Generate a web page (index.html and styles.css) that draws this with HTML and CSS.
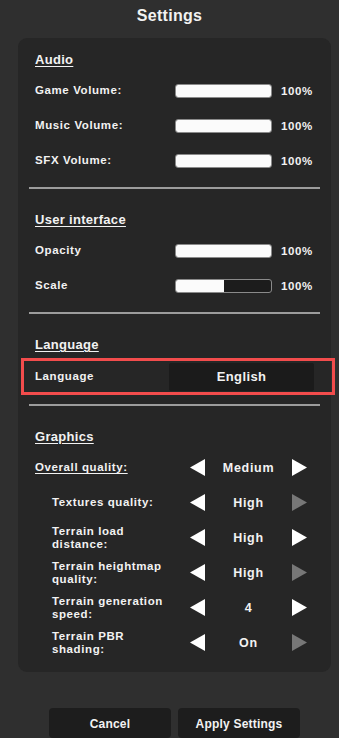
FILE: index.html
```html
<!DOCTYPE html>
<html>
<head>
<meta charset="utf-8">
<link rel="stylesheet" href="styles.css">
</head>
<body>
<div class="screen">
  <h1 class="title">Settings</h1>
  <div class="panel">
    <section class="section first">
      <h2 class="heading">Audio</h2>
      <div class="slider-row"><span class="label">Game Volume:</span><div class="bar"><div class="fill" style="width:100%"></div></div><span class="pct">100%</span></div>
      <div class="slider-row"><span class="label">Music Volume:</span><div class="bar"><div class="fill" style="width:100%"></div></div><span class="pct">100%</span></div>
      <div class="slider-row"><span class="label">SFX Volume:</span><div class="bar"><div class="fill" style="width:100%"></div></div><span class="pct">100%</span></div>
    </section>
    <hr class="divider">
    <section class="section">
      <h2 class="heading">User interface</h2>
      <div class="slider-row"><span class="label">Opacity</span><div class="bar"><div class="fill" style="width:100%"></div></div><span class="pct">100%</span></div>
      <div class="slider-row"><span class="label">Scale</span><div class="bar"><div class="fill" style="width:50%"></div></div><span class="pct">100%</span></div>
    </section>
    <hr class="divider">
    <section class="section">
      <h2 class="heading">Language</h2>
      <div class="lang-row"><span class="label">Language</span><div class="dropdown">English</div></div>
    </section>
    <hr class="divider">
    <section class="section">
      <h2 class="heading">Graphics</h2>
      <div class="opt-row"><span class="label main">Overall quality:</span>
        <svg class="arrow" viewBox="0 0 15 17"><polygon points="15,0 15,17 0,8.5"/></svg>
        <span class="value">Medium</span>
        <svg class="arrow" viewBox="0 0 15 17"><polygon points="0,0 0,17 15,8.5"/></svg>
      </div>
      <div class="opt-row"><span class="label sub">Textures quality:</span>
        <svg class="arrow" viewBox="0 0 15 17"><polygon points="15,0 15,17 0,8.5"/></svg>
        <span class="value">High</span>
        <svg class="arrow off" viewBox="0 0 15 17"><polygon points="0,0 0,17 15,8.5"/></svg>
      </div>
      <div class="opt-row"><span class="label sub">Terrain load distance:</span>
        <svg class="arrow" viewBox="0 0 15 17"><polygon points="15,0 15,17 0,8.5"/></svg>
        <span class="value">High</span>
        <svg class="arrow" viewBox="0 0 15 17"><polygon points="0,0 0,17 15,8.5"/></svg>
      </div>
      <div class="opt-row"><span class="label sub">Terrain heightmap quality:</span>
        <svg class="arrow" viewBox="0 0 15 17"><polygon points="15,0 15,17 0,8.5"/></svg>
        <span class="value">High</span>
        <svg class="arrow off" viewBox="0 0 15 17"><polygon points="0,0 0,17 15,8.5"/></svg>
      </div>
      <div class="opt-row"><span class="label sub">Terrain generation speed:</span>
        <svg class="arrow" viewBox="0 0 15 17"><polygon points="15,0 15,17 0,8.5"/></svg>
        <span class="value">4</span>
        <svg class="arrow" viewBox="0 0 15 17"><polygon points="0,0 0,17 15,8.5"/></svg>
      </div>
      <div class="opt-row"><span class="label sub">Terrain PBR shading:</span>
        <svg class="arrow" viewBox="0 0 15 17"><polygon points="15,0 15,17 0,8.5"/></svg>
        <span class="value">On</span>
        <svg class="arrow off" viewBox="0 0 15 17"><polygon points="0,0 0,17 15,8.5"/></svg>
      </div>
    </section>
  </div>
  <div class="buttons">
    <button class="btn">Cancel</button>
    <button class="btn">Apply Settings</button>
  </div>
</div>
</body>
</html>
```

FILE: styles.css
```css
* { box-sizing: border-box; }
html, body {
  margin: 0;
  padding: 0;
  background: #2f2f2f;
  height: 100%;
  overflow: hidden;
}
body {
  font-family: "Liberation Sans", Arial, sans-serif;
  font-weight: bold;
  color: #f2f2f2;
}
.screen {
  display: flex;
  flex-direction: column;
}
.title {
  margin: 0;
  height: 38px;
  padding-top: 6px;
  font-size: 16px;
  line-height: 20px;
  letter-spacing: 0.3px;
  text-align: center;
  font-weight: bold;
}
.panel {
  margin: 0 8px 0 18px;
  background: #262626;
  border-radius: 9px;
  padding: 0 11px 12px 11px;
}
.section {
  padding-top: 21px;
  padding-left: 6px;
}
.section.first { padding-top: 12px; }
.heading {
  margin: 0 0 3px 0;
  height: 20px;
  font-size: 13px;
  line-height: 20px;
  letter-spacing: 0.3px;
  text-decoration: underline;
  text-decoration-thickness: 1px;
  text-underline-offset: 2px;
  font-weight: bold;
}
.label {
  font-size: 11.5px;
  letter-spacing: 0.6px;
  line-height: 13px;
}
.slider-row {
  height: 35px;
  display: grid;
  grid-template-columns: 131px 97px auto;
  column-gap: 9px;
  align-items: center;
}
.bar {
  height: 14px;
  background: #1c1c1c;
  border: 1px solid #8a8a8a;
  border-radius: 3px;
  overflow: hidden;
}
.fill {
  height: 100%;
  background: #fbfbfb;
}
.pct {
  font-size: 11.5px;
  letter-spacing: 0.6px;
}
.divider {
  margin: 9px 0 0 0;
  border: 0;
  height: 2px;
  background: #9c9c9c;
}
.lang-row {
  margin: 0 -15px 0 -14px;
  height: 37px;
  border: 3px solid #f24c4c;
  padding: 0 18px 0 11px;
  display: grid;
  grid-template-columns: 134px 1fr;
  align-items: center;
}
.dropdown {
  height: 28px;
  background: #1b1b1b;
  border-radius: 2px;
  font-size: 13px;
  letter-spacing: 0.4px;
  line-height: 28px;
  text-align: center;
}
.opt-row {
  height: 35px;
  display: grid;
  grid-template-columns: 155px 15px 87px 15px;
  align-items: center;
}
.label.main {
  text-decoration: underline;
  text-decoration-thickness: 1px;
  text-underline-offset: 2px;
}
.label.sub {
  padding-left: 17px;
  padding-right: 26px;
}
.arrow {
  width: 15px;
  height: 17px;
  fill: #ffffff;
  display: block;
}
.arrow.off { fill: #777777; }
.value {
  text-align: center;
  font-size: 12.5px;
  letter-spacing: 0.7px;
}
.buttons {
  margin-top: 36px;
  padding-left: 49px;
  display: flex;
  gap: 7px;
}
.btn {
  width: 122px;
  height: 30px;
  background: #1d1d1d;
  border: 0;
  border-radius: 4px;
  color: #f2f2f2;
  font-family: "Liberation Sans", Arial, sans-serif;
  font-weight: bold;
  font-size: 12px;
  letter-spacing: 0.2px;
  padding: 0;
  padding-top: 2px;
}
```
